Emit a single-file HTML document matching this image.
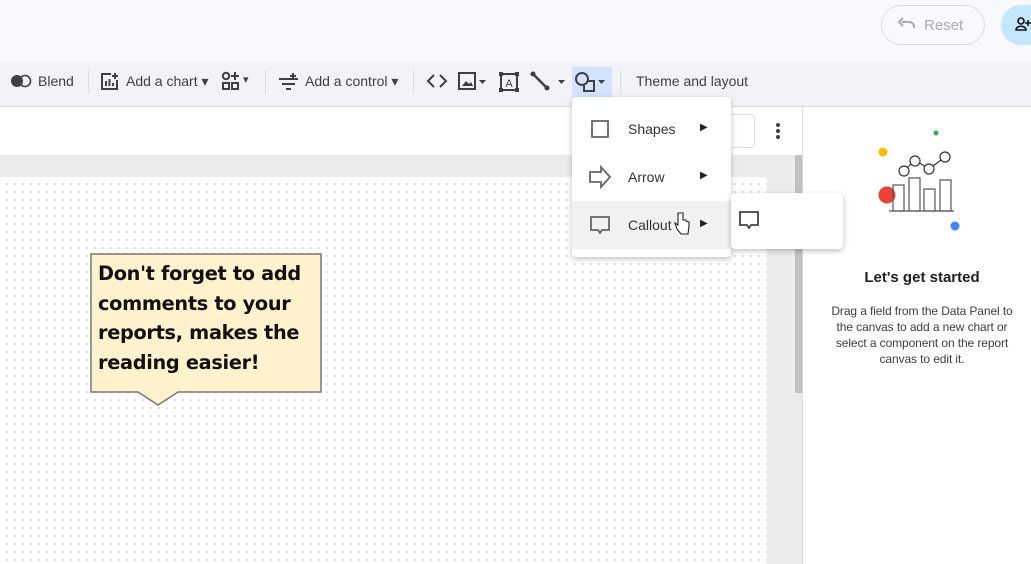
<!DOCTYPE html>
<html><head><style>
*{margin:0;padding:0;box-sizing:border-box}
body{width:1031px;height:564px;overflow:hidden;font-family:"Liberation Sans",Arial,sans-serif;background:#fff;position:relative}
.abs{position:absolute}
.tb{color:#3c4043;font-size:14px}
</style></head><body>
<div class="abs" style="left:0;top:0;width:1031px;height:62px;background:#f8f9fd"></div>
<div class="abs" style="left:881px;top:5px;width:104px;height:40px;border:1px solid #dadce0;border-radius:20px"></div>
<div class="abs" style="left:924px;top:17px;color:#a8abb0;font-size:15px">Reset</div>
<svg class="abs" style="left:898px;top:17px" width="18" height="14" viewBox="0 0 18 14"><path d="M4 5 H11 A5 5 0 0 1 16 11" fill="none" stroke="#a8abb0" stroke-width="2"/><path d="M5 1 L1 5 L5 9" fill="none" stroke="#a8abb0" stroke-width="2"/></svg>
<div class="abs" style="left:1001px;top:5px;width:60px;height:40px;border-radius:20px;background:#c2e7ff"></div>
<svg class="abs" style="left:1015px;top:16px" width="16" height="16" viewBox="0 0 16 16"><circle cx="6" cy="5" r="3" fill="none" stroke="#111" stroke-width="1.6"/><path d="M1 14 C1 9 11 9 11 14 Z" fill="none" stroke="#111" stroke-width="1.6"/><path d="M13 4 V10 M10 7 H16" stroke="#111" stroke-width="1.6"/></svg>

<div class="abs" style="left:0;top:62px;width:1031px;height:45px;background:#f1f3f7;border-bottom:1px solid #dadce0"></div>
<svg class="abs" style="left:10px;top:74px" width="22" height="14"><circle cx="7" cy="7" r="6" fill="#3c4043"/><circle cx="15" cy="7" r="5.5" fill="#f1f3f7" stroke="#3c4043" stroke-width="1.6"/><path d="M11 2.5 A6 6 0 0 1 11 11.5 A5.5 5.5 0 0 1 11 2.5Z" fill="#3c4043"/></svg>
<div class="abs tb" style="left:38px;top:73px">Blend</div>
<div class="abs" style="left:88px;top:70px;width:1px;height:24px;background:#dadce0"></div>
<svg class="abs" style="left:100px;top:71px" width="20" height="20" viewBox="0 0 20 20"><path d="M11 3 H2 V18 H17 V9" fill="none" stroke="#3c4043" stroke-width="2"/><path d="M6 10 V15 M9.5 8 V15 M13 12 V15 M15 2 V8 M12 5 H18" stroke="#3c4043" stroke-width="2"/></svg>
<div class="abs tb" style="left:126px;top:73px">Add a chart ▾</div>
<svg class="abs" style="left:221px;top:71px" width="22" height="20" viewBox="0 0 22 20"><circle cx="5" cy="5" r="3.2" fill="none" stroke="#3c4043" stroke-width="2"/><path d="M14 1 V9 M10 5 H18" stroke="#3c4043" stroke-width="2"/><rect x="2" y="12" width="6" height="6" fill="none" stroke="#3c4043" stroke-width="2"/><rect x="11" y="12" width="6" height="6" fill="none" stroke="#3c4043" stroke-width="2"/></svg>
<div class="abs tb" style="left:243px;top:73px;font-size:11px">▾</div>
<div class="abs" style="left:265px;top:70px;width:1px;height:24px;background:#dadce0"></div>
<svg class="abs" style="left:278px;top:72px" width="22" height="18" viewBox="0 0 22 18"><path d="M1 7 H20 M4 12 H17 M8 17 H13 M15 1 V8 M12 4 H18" stroke="#3c4043" stroke-width="2"/></svg>
<div class="abs tb" style="left:305px;top:73px">Add a control ▾</div>
<div class="abs" style="left:413px;top:70px;width:1px;height:24px;background:#dadce0"></div>
<svg class="abs" style="left:426px;top:74px" width="22" height="14"><path d="M8 1 L2 7 L8 13 M14 1 L20 7 L14 13" fill="none" stroke="#3c4043" stroke-width="2"/></svg>
<svg class="abs" style="left:458px;top:72px" width="32" height="20"><rect x="1" y="1" width="16" height="16" fill="none" stroke="#3c4043" stroke-width="2"/><path d="M4 14 L8 9 L11 12 L13 10 L15 14Z" fill="#3c4043"/><path d="M21 8 L28 8 L24.5 12Z" fill="#3c4043"/></svg>
<svg class="abs" style="left:499px;top:72px" width="20" height="20"><rect x="2" y="2" width="16" height="16" fill="none" stroke="#3c4043" stroke-width="2"/><rect x="0" y="0" width="4" height="4" fill="#3c4043"/><rect x="16" y="0" width="4" height="4" fill="#3c4043"/><rect x="0" y="16" width="4" height="4" fill="#3c4043"/><rect x="16" y="16" width="4" height="4" fill="#3c4043"/><text x="10" y="15" font-size="11" text-anchor="middle" fill="#3c4043" font-family="Liberation Sans">A</text></svg>
<svg class="abs" style="left:530px;top:71px" width="40" height="22"><path d="M3 3 L17 17" stroke="#3c4043" stroke-width="2.5"/><circle cx="3" cy="3" r="2.5" fill="#3c4043"/><circle cx="17" cy="17" r="2.5" fill="#3c4043"/><path d="M28 9 L35 9 L31.5 13Z" fill="#3c4043"/></svg>
<div class="abs" style="left:572px;top:67px;width:40px;height:30px;background:#d3e3fd"></div>
<svg class="abs" style="left:574px;top:71px" width="36" height="22"><circle cx="8" cy="8" r="6" fill="none" stroke="#3c4043" stroke-width="2"/><path d="M14 10 H20 V20 H10 V14" fill="none" stroke="#3c4043" stroke-width="2"/><path d="M24 9 L31 9 L27.5 13Z" fill="#3c4043"/></svg>
<div class="abs" style="left:620px;top:70px;width:1px;height:24px;background:#dadce0"></div>
<div class="abs tb" style="left:636px;top:73px">Theme and layout</div>

<div class="abs" style="left:0;top:155px;width:803px;height:409px;background:#ebebeb"></div>
<div class="abs" style="left:0;top:177px;width:767px;height:387px;background-color:#fff;background-image:radial-gradient(circle,#d4d4d4 0.8px,transparent 1px);background-size:8px 8px;background-position:3px 3px"></div>
<div class="abs" style="left:795px;top:155px;width:8px;height:238px;background:#c1c1c1;border-radius:2px"></div>
<div class="abs" style="left:721px;top:114px;width:34px;height:34px;border:1px solid #e0e0e0;border-radius:4px;color:#ccc;font-size:14px;line-height:32px;padding-left:4px">t</div>
<div class="abs" style="left:776px;top:123px;width:4px;height:4px;border-radius:2px;background:#3c4043;box-shadow:0 6px 0 #3c4043,0 12px 0 #3c4043"></div>

<div class="abs" style="left:802px;top:107px;width:1px;height:457px;background:#dadce0"></div>
<svg class="abs" style="left:862px;top:125px" width="120" height="120"><circle cx="74" cy="8" r="2.5" fill="#34a853"/><circle cx="21" cy="27" r="4.5" fill="#fbbc04"/><circle cx="93" cy="101" r="4.5" fill="#4285f4"/><path d="M42 46 L53 35 M53 35 L67 44 M67 44 L83 32" stroke="#333" stroke-width="1.2"/><circle cx="42" cy="46" r="5" fill="#fff" stroke="#333" stroke-width="1.2"/><circle cx="53" cy="36" r="5" fill="#fff" stroke="#333" stroke-width="1.2"/><circle cx="67" cy="44" r="5" fill="#fff" stroke="#333" stroke-width="1.2"/><circle cx="83" cy="32" r="5" fill="#fff" stroke="#333" stroke-width="1.2"/><circle cx="25" cy="70" r="8.5" fill="#ea4335"/><rect x="31" y="60" width="11" height="26" fill="none" stroke="#555" stroke-width="1.2"/><rect x="47" y="53" width="11" height="33" fill="none" stroke="#555" stroke-width="1.2"/><rect x="62" y="64" width="11" height="22" fill="none" stroke="#555" stroke-width="1.2"/><rect x="78" y="55" width="11" height="31" fill="none" stroke="#555" stroke-width="1.2"/><path d="M27 86 H92" stroke="#555" stroke-width="1.2"/></svg>
<div class="abs" style="left:803px;top:269px;width:238px;text-align:center;font-size:15px;font-weight:bold;color:#202124">Let's get started</div>
<div class="abs" style="left:823px;top:303px;width:198px;text-align:center;font-size:12px;line-height:16px;color:#3c4043;letter-spacing:-0.1px">Drag a field from the Data Panel to the canvas to add a new chart or select a component on the report canvas to edit it.</div>

<svg class="abs" style="left:89px;top:252px" width="236" height="156"><path d="M2 2 H232 V140 H89 L69 153 L49 140 H2 Z" fill="#fff2cc" stroke="#777" stroke-width="1.5"/></svg>
<div class="abs" style="left:98px;top:259px;font-family:'DejaVu Sans',sans-serif;font-weight:bold;font-size:19.3px;line-height:29.5px;color:#111;letter-spacing:-0.3px;white-space:nowrap">Don't forget to add<br>comments to your<br>reports, makes the<br>reading easier!</div>

<div class="abs" style="left:572px;top:97px;width:159px;height:160px;background:#fff;border-radius:4px;box-shadow:0 2px 6px rgba(0,0,0,.25)"></div>
<div class="abs" style="left:572px;top:201px;width:159px;height:48px;background:#f1f1f1"></div>
<svg class="abs" style="left:588px;top:117px" width="24" height="120"><rect x="4" y="4" width="16" height="16" fill="none" stroke="#666" stroke-width="1.8"/><path d="M2 55 H13 V50 L22 60 L13 70 V65 H2 Z" fill="none" stroke="#666" stroke-width="1.8"/><path d="M3 100 H21 V113 H14 L12 116 L10 113 H3 Z" fill="none" stroke="#666" stroke-width="1.8"/></svg>
<div class="abs" style="left:628px;top:121px;font-size:14px;color:#333">Shapes</div>
<div class="abs" style="left:628px;top:169px;font-size:14px;color:#333">Arrow</div>
<div class="abs" style="left:628px;top:217px;font-size:14px;color:#333">Callout</div>
<div class="abs" style="left:700px;top:122px;font-size:10px;color:#222">▶</div>
<div class="abs" style="left:700px;top:170px;font-size:10px;color:#222">▶</div>
<div class="abs" style="left:700px;top:218px;font-size:10px;color:#222">▶</div>
<svg class="abs" style="left:673px;top:211px" width="18" height="26"><path d="M5 2 V14 L2 12 L4 18 L8 23 H15 L16 15 V11 L13 10 V9 L10 9 V2 Z" fill="#fff" stroke="#222" stroke-width="1.1"/></svg>
<div class="abs" style="left:731px;top:193px;width:112px;height:56px;background:#fff;border-radius:4px;box-shadow:0 2px 6px rgba(0,0,0,.25)"></div>
<svg class="abs" style="left:738px;top:210px" width="24" height="22"><path d="M2 2 H20 V15 H13 L11 18 L9 15 H2 Z" fill="none" stroke="#444" stroke-width="1.8"/></svg>
</body></html>
